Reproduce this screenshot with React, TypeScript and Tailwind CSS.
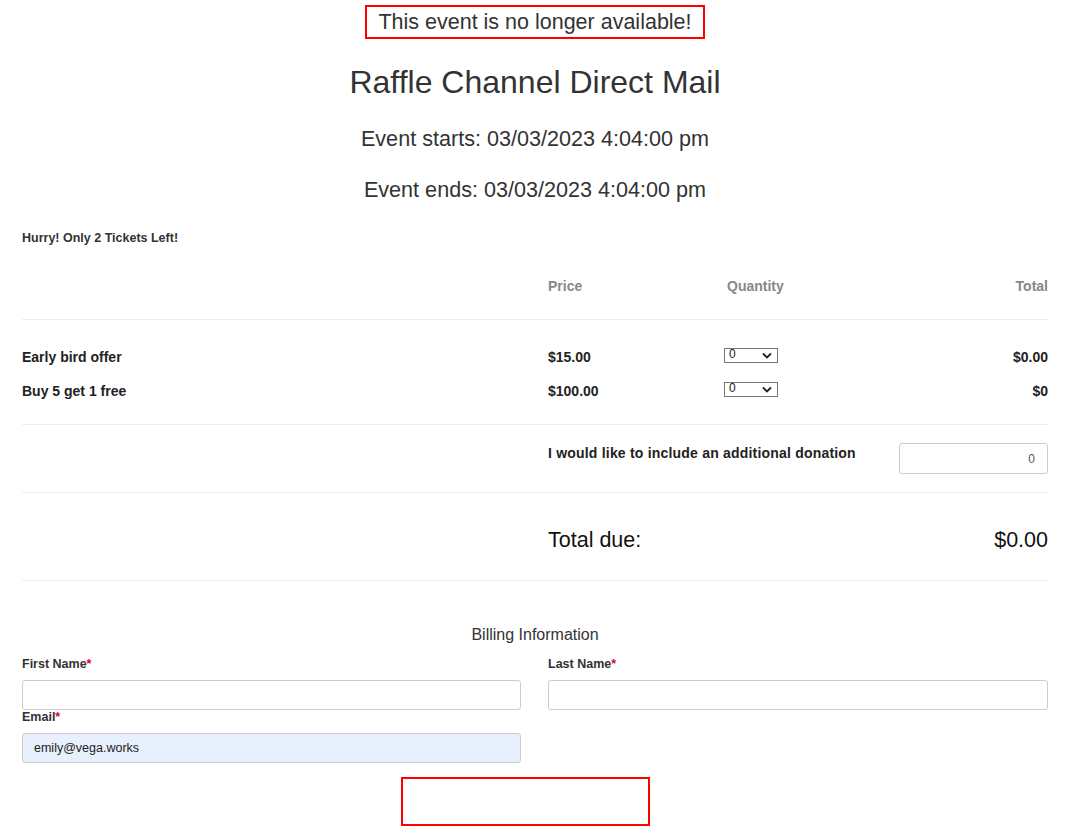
const font = { fontFamily: '"Liberation Sans", Arial, sans-serif' }

function Hr() {
  return <div className="h-px bg-[#eeeeee]" />
}

function QtySelect() {
  return (
    <div className="flex h-[15px] w-[54px] items-center justify-between border border-[#767676] bg-white pl-[4px] pr-[4px] text-[12px] font-normal leading-none text-[#222]">
      <span className="-mt-[2px]">0</span>
      <svg width="10" height="7" viewBox="0 0 10 7" className="mr-[1px]">
        <path d="M1 1.5 L5 5.5 L9 1.5" fill="none" stroke="#222" strokeWidth="1.8" />
      </svg>
    </div>
  )
}

function Field({ label, value, filled }: { label: string; value?: string; filled?: boolean }) {
  return (
    <div className="flex flex-col">
      <label className="mb-[9px] text-[12.5px] font-bold leading-[14px] text-[#333]">
        {label}
        <span className="text-[#e4002b]">*</span>
      </label>
      <div
        className={`flex h-[30px] items-center rounded-[3px] border border-[#cccccc] px-[11px] text-[12.5px] text-[#222] ${
          filled ? 'bg-[#e8f0fe]' : 'bg-white'
        }`}
      >
        {value}
      </div>
    </div>
  )
}

export default function App() {
  return (
    <div className="min-h-[828px] bg-white text-[#333]" style={font}>
      <div className="ml-[22px] w-[1026px]">
        <div className="flex justify-center pt-[5px]">
          <div className="flex h-[34px] w-[340px] items-center justify-center border-2 border-[#ff0000] text-[21.5px] text-[#333]">
            This event is no longer available!
          </div>
        </div>

        <h1 className="mt-[23px] text-center text-[32px] leading-[40px] text-[#333]">Raffle Channel Direct Mail</h1>
        <p className="mt-[22px] text-center text-[21.6px] leading-[30px] text-[#333]">Event starts: 03/03/2023 4:04:00 pm</p>
        <p className="mt-[21px] text-center text-[21.6px] leading-[30px] text-[#333]">Event ends: 03/03/2023 4:04:00 pm</p>

        <p className="mt-[26px] text-[12.5px] font-bold leading-[15px] text-[#333]">Hurry! Only 2 Tickets Left!</p>

        <div className="mt-[32px] grid grid-cols-[526px_179px_1fr] pb-[25px] text-[14px] font-bold leading-[16px] text-[#888]">
          <div />
          <div>Price</div>
          <div className="flex justify-between">
            <span>Quantity</span>
            <span>Total</span>
          </div>
        </div>
        <Hr />

        <div className="flex flex-col gap-[18px] pt-[29px] pb-[25px] text-[14px] font-bold leading-[16px] text-[#222]">
          <div className="grid grid-cols-[526px_176px_1fr] items-center">
            <div>Early bird offer</div>
            <div>$15.00</div>
            <div className="flex items-center justify-between">
              <div className="-mt-[4px]"><QtySelect /></div>
              <span>$0.00</span>
            </div>
          </div>
          <div className="grid grid-cols-[526px_176px_1fr] items-center">
            <div>Buy 5 get 1 free</div>
            <div>$100.00</div>
            <div className="flex items-center justify-between">
              <div className="-mt-[4px]"><QtySelect /></div>
              <span>$0</span>
            </div>
          </div>
        </div>
        <Hr />

        <div className="grid grid-cols-[526px_1fr] pt-[18px] pb-[18px]">
          <div />
          <div className="flex items-start justify-between">
            <span className="mt-[2px] text-[14px] font-bold leading-[16px] tracking-[0.2px] text-[#222]">
              I would like to include an additional donation
            </span>
            <div className="flex h-[31px] w-[149px] items-center justify-end rounded-[3px] border border-[#cccccc] px-[12px] text-[12px] text-[#555]">
              0
            </div>
          </div>
        </div>
        <Hr />

        <div className="grid grid-cols-[526px_1fr] pt-[34px] pb-[27px]">
          <div />
          <div className="flex items-center justify-between text-[21.5px] leading-[26px] text-[#111]">
            <span>Total due:</span>
            <span>$0.00</span>
          </div>
        </div>
        <Hr />

        <h2 className="mt-[44px] text-center text-[16px] leading-[20px] text-[#333]">Billing Information</h2>

        <div className="mt-[12px] grid grid-cols-[499px_1fr] gap-x-[27px]">
          <Field label="First Name" />
          <Field label="Last Name" />
        </div>
        <div className="grid grid-cols-[499px_1fr] gap-x-[27px]">
          <Field label="Email" value="emily@vega.works" filled />
        </div>

        <div className="mt-[14px] ml-[379px] h-[49px] w-[249px] border-2 border-[#ff0000]" />
      </div>
    </div>
  )
}
